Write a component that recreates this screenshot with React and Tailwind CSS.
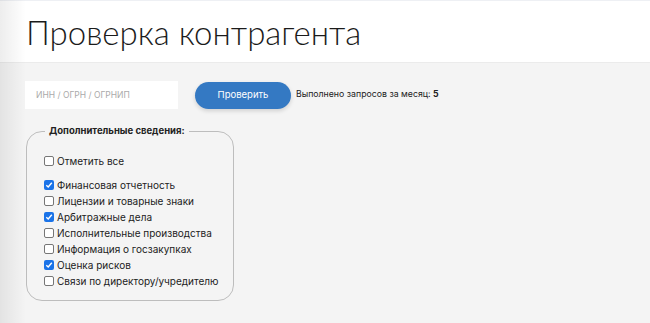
import { useState } from 'react';

const OPTIONS = [
  { id: 'fin', label: 'Финансовая отчетность', checked: true },
  { id: 'lic', label: 'Лицензии и товарные знаки', checked: false },
  { id: 'arb', label: 'Арбитражные дела', checked: true },
  { id: 'isp', label: 'Исполнительные производства', checked: false },
  { id: 'gos', label: 'Информация о госзакупках', checked: false },
  { id: 'risk', label: 'Оценка рисков', checked: true },
  { id: 'dir', label: 'Связи по директору/учредителю', checked: false },
];

function Box({ checked, onClick }) {
  return (
    <span
      onClick={onClick}
      className={`w-[10px] h-[10px] rounded-[2px] flex items-center justify-center shrink-0 ${
        checked ? 'bg-[#1a73e8]' : 'bg-white border border-[#767676]'
      }`}
    >
      {checked && (
        <svg width="8" height="8" viewBox="0 0 8 8">
          <path d="M1.3 4.2 L3.2 6 L6.8 1.8" fill="none" stroke="white" strokeWidth="1.4" />
        </svg>
      )}
    </span>
  );
}

export default function App() {
  const [opts, setOpts] = useState(OPTIONS);
  const allChecked = opts.every(o => o.checked);

  function toggle(id) {
    setOpts(o => o.map(x => (x.id === id ? { ...x, checked: !x.checked } : x)));
  }

  return (
    <div className="relative min-h-[323px] bg-[#f4f4f4] font-['Inter',sans-serif] text-[#222]">
      {/* left shade */}
      <div className="absolute left-0 top-0 bottom-0 w-[26px] pointer-events-none bg-gradient-to-r from-black/[0.07] to-transparent" />

      {/* Header */}
      <div className="border-t border-[#eef0f4] bg-white border-b border-b-[#ebebeb] h-[63px] px-[26px] pt-[12px]">
        <h1 className="font-['Lato',sans-serif] font-light text-[33px] leading-[38px] text-[#1b1b1b]">
          Проверка контрагента
        </h1>
      </div>

      {/* Search row */}
      <div className="flex items-center px-[25px] pt-[18px]">
        <input
          placeholder="ИНН / ОГРН / ОГРНИП"
          className="w-[153px] h-[28px] bg-white px-[11px] text-[8.5px] outline-none placeholder:text-[#aaa]"
        />
        <button className="ml-[17px] w-[96px] h-[27px] rounded-full bg-[#3479c3] text-white text-[9.5px] shadow-[0_2px_4px_rgba(0,0,0,0.15)]">
          Проверить
        </button>
        <span className="ml-[5px] text-[8.75px]">
          Выполнено запросов за месяц: <b>5</b>
        </span>
      </div>

      {/* Options */}
      <fieldset className="mt-[16px] ml-[26px] w-[208px] h-[176px] border border-[#bdbdbd] rounded-[16px] pl-[17px] pr-0 pt-[16px] whitespace-nowrap">
        <legend className="ml-[1px] px-[4px] font-bold text-[9.5px] leading-[12px]">Дополнительные сведения:</legend>
        <label className="flex items-center gap-[3px] text-[10px] h-[16px]">
          <Box
            checked={allChecked}
            onClick={() => setOpts(o => o.map(x => ({ ...x, checked: !allChecked })))}
          />
          Отметить все
        </label>
        <div className="mt-[8px]">
          {opts.map(o => (
            <label key={o.id} className="flex items-center gap-[3px] text-[10px] h-[16px]">
              <Box checked={o.checked} onClick={() => toggle(o.id)} />
              {o.label}
            </label>
          ))}
        </div>
      </fieldset>
    </div>
  );
}
